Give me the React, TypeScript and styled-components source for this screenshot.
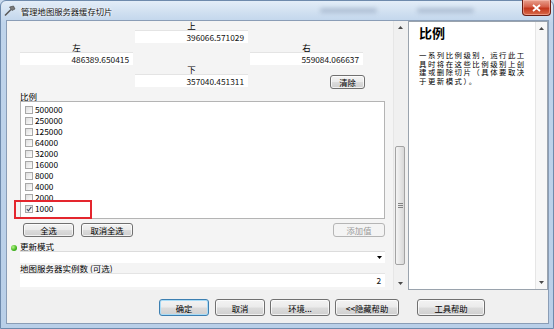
import React from "react";
import styled, { createGlobalStyle, css } from "styled-components";

const GlobalStyle = createGlobalStyle`
  html, body {
    margin: 0;
    padding: 0;
    width: 554px;
    height: 329px;
    overflow: hidden;
    background: #c9daee;
  }
  body {
    font-family: "Noto Sans CJK SC", "Noto Sans", sans-serif;
    font-size: 8.5px;
    color: #000;
  }
  * { box-sizing: border-box; }
`;

const Window = styled.div`
  width: 554px;
  height: 329px;
  display: flex;
  flex-direction: column;
  border: 1px solid #6e8aac;
  border-radius: 6px 6px 0 0;
  background: linear-gradient(180deg, #e3edf8 0px, #cfdff0 12px, #bfd4eb 22px, #b9cfe8 100%);
`;

const TitleBar = styled.div`
  height: 19px;
  display: flex;
  align-items: center;
  padding-left: 3px;
`;

const TitleText = styled.span`
  flex-shrink: 0;
  white-space: nowrap;
  margin-left: 5px;
  font-size: 8.3px;
  line-height: 10px;
  color: #111;
  text-shadow: 0 0 4px #ffffff, 0 0 2px #ffffff;
`;

const Smudge = styled.div<{ $ml: number; $w: number }>`
  flex-shrink: 0;
  margin-left: ${(p) => p.$ml}px;
  width: ${(p) => p.$w}px;
  height: 5px;
  border-radius: 3px;
  background: rgba(110, 130, 160, 0.35);
  filter: blur(2px);
`;

const CloseButton = styled.div`
  flex-shrink: 0;
  margin-left: auto;
  margin-right: 2px;
  align-self: flex-start;
  margin-top: -1px;
  width: 29px;
  height: 16px;
  border: 1px solid #6b1e14;
  border-top: none;
  border-radius: 0 0 4px 4px;
  background: linear-gradient(180deg, #e8a08e 0%, #d6604a 45%, #c3361c 55%, #d86b4a 100%);
  display: flex;
  align-items: center;
  justify-content: center;
  box-shadow: inset 0 0 0 1px rgba(255, 200, 190, 0.5);
`;

const Client = styled.div`
  flex: 1;
  margin: 0 4px 4px 5px;
  border: 1px solid #8a9db6;
  background: #f0f0f0;
  display: flex;
  flex-direction: column;
`;

const Main = styled.div`
  height: 269px;
  display: flex;
  gap: 2px;
`;

const LeftPane = styled.div`
  width: 399px;
  display: flex;
  background: #f4f4f4;
`;

const Form = styled.div`
  flex: 1;
  position: relative;
  display: flex;
  flex-direction: column;
  padding-left: 13px;
`;

const BBox = styled.div`
  display: grid;
  grid-template-columns: repeat(3, 113px);
  grid-template-rows: 9px 13px 9px 13px 9px 13px;
  column-gap: 2px;
`;

const Cell = styled.div<{ $col: number; $row: string }>`
  grid-column: ${(p) => p.$col};
  grid-row: ${(p) => p.$row};
`;

const DirLabel = styled(Cell)`
  text-align: center;
  font-size: 8.5px;
  line-height: 9px;
`;

const Field = styled.div`
  height: 100%;
  background: #ffffff;
  border-top: 1px solid #e4e4e4;
  text-align: right;
  padding-right: 4px;
  font-size: 8.3px;
  line-height: 12px;
  color: #111;
`;

const winButton = css`
  display: flex;
  align-items: center;
  justify-content: center;
  border: 1px solid #707070;
  border-radius: 3px;
  background: linear-gradient(180deg, #f3f3f3 0%, #ebebeb 48%, #dcdcdc 52%, #cfcfcf 100%);
  font-size: 8.3px;
  color: #000;
  box-shadow: inset 0 0 0 1px rgba(255, 255, 255, 0.7);
`;

const Btn = styled.div<{ $w: number; $h?: number; $primary?: boolean; $disabled?: boolean }>`
  ${winButton};
  width: ${(p) => p.$w}px;
  height: ${(p) => p.$h ?? 14}px;
  ${(p) =>
    p.$primary &&
    css`
      border-color: #3c7fb1;
      box-shadow: inset 0 0 0 1px #a8dcf7;
    `}
  ${(p) =>
    p.$disabled &&
    css`
      border-color: #b5b5b5;
      background: #f4f4f4;
      color: #9a9a9a;
      box-shadow: none;
    `}
`;

const ClearButton = styled(Btn)`
  grid-column: 3;
  grid-row: 5 / 7;
  justify-self: end;
  align-self: end;
  margin-right: -2px;
  margin-bottom: -2px;
`;

const ScaleLabel = styled.div`
  margin-top: 4px;
  height: 10px;
  line-height: 10px;
`;

const ScaleList = styled.div`
  width: 365px;
  height: 118px;
  border: 1px solid #b4b4b4;
  background: #ffffff;
  padding: 2px 0 0 4px;
  display: flex;
  flex-direction: column;
`;

const ScaleItem = styled.div`
  height: 11px;
  display: flex;
  align-items: center;
  gap: 2px;
  font-size: 8.3px;
  line-height: 11px;
`;

const CheckBox = styled.div<{ $checked?: boolean }>`
  width: 8px;
  height: 8px;
  border: 1px solid #a8a8a8;
  background: linear-gradient(135deg, #dedede 0%, #f4f4f4 70%, #ffffff 100%);
  display: flex;
  align-items: center;
  justify-content: center;
`;

const Highlight = styled.div`
  position: absolute;
  left: 7px;
  top: 179px;
  width: 78px;
  height: 19px;
  border: 2px solid #e4262e;
  pointer-events: none;
`;

const ButtonRow = styled.div`
  margin-top: 4px;
  width: 365px;
  height: 14px;
  display: flex;
`;

const RowButton = styled(Btn)<{ $ml: string }>`
  margin-left: ${(p) => p.$ml};
`;

const ParamLabel = styled.div<{ $indent?: boolean }>`
  height: 9px;
  line-height: 9px;
  display: flex;
  align-items: center;
  gap: 3px;
  margin-top: ${(p) => (p.$indent ? "5px" : "1px")};
  margin-left: ${(p) => (p.$indent ? "-9px" : "0")};
`;

const GreenDot = styled.div`
  width: 6px;
  height: 6px;
  margin-top: 3px;
  border-radius: 50%;
  background: radial-gradient(circle at 35% 35%, #b6f58a 0%, #3fb51c 60%, #2a8a12 100%);
`;

const Dropdown = styled.div`
  width: 365px;
  height: 12px;
  background: #ffffff;
  border-top: 1px solid #dcdcdc;
  display: flex;
  align-items: center;
  justify-content: flex-end;
  padding-right: 3px;
`;

const CountField = styled(Field)`
  width: 365px;
  height: 14px;
  line-height: 13px;
`;

const ScrollBar = styled.div<{ $w: number }>`
  width: ${(p) => p.$w}px;
  display: flex;
  flex-direction: column;
  background: #f0f0f0;
  border-left: 1px solid #e6e6e6;
`;

const ScrollArrow = styled.div`
  height: 13px;
  display: flex;
  align-items: center;
  justify-content: center;
`;

const Track = styled.div`
  flex: 1;
  display: flex;
  flex-direction: column;
`;

const Thumb = styled.div<{ $top: number; $h: number }>`
  margin: ${(p) => p.$top}px 1px 0 1px;
  height: ${(p) => p.$h}px;
  border: 1px solid #a3a3a3;
  border-radius: 2px;
  background: linear-gradient(90deg, #f4f4f4 0%, #e6e6e6 50%, #d8d8d8 100%);
  display: flex;
  align-items: center;
  justify-content: center;
`;

const RightPane = styled.div`
  flex: 1;
  display: flex;
  background: #ffffff;
  border: 1px solid #9aa3ad;
`;

const HelpBody = styled.div`
  flex: 1;
  padding: 3px 0 0 10px;
`;

const HelpTitle = styled.div`
  font-size: 13px;
  font-weight: 700;
  height: 16px;
  line-height: 16px;
`;

const HelpText = styled.div`
  margin-top: 10px;
  width: 110px;
  font-size: 7.4px;
  letter-spacing: 1.5px;
  line-height: 8.5px;
`;

const HelpScroll = styled(ScrollBar)`
  justify-content: space-between;
  background: #f7f7f7;
`;

const Footer = styled.div`
  flex: 1;
  display: flex;
  align-items: flex-start;
  padding: 9px 0 0 152px;
`;

const FooterButton = styled(Btn)<{ $ml: number }>`
  margin-left: ${(p) => p.$ml}px;
`;

const Tri = ({ up }: { up?: boolean }) => (
  <svg width="5" height="3" viewBox="0 0 5 3">
    <polygon points={up ? "0,3 5,3 2.5,0" : "0,0 5,0 2.5,3"} fill="#4a4a4a" />
  </svg>
);

const scales = ["500000", "250000", "125000", "64000", "32000", "16000", "8000", "4000", "2000", "1000"];

export default function App() {
  return (
    <>
      <GlobalStyle />
      <Window>
        <TitleBar>
          <svg width="12" height="12" viewBox="0 0 12 12">
            <path d="M1 10.5 L7 4.5" stroke="#5a5a5a" strokeWidth="1.6" />
            <path d="M5.5 2 L9.5 1 L11 4 L8 5.5 Z" fill="#7b7b7b" stroke="#3f3f3f" strokeWidth="0.6" />
          </svg>
          <TitleText>管理地图服务器缓存切片</TitleText>
          <Smudge $ml={208} $w={57} />
          <Smudge $ml={40} $w={57} />
          <CloseButton>
            <svg width="9" height="8" viewBox="0 0 9 8">
              <path d="M1 1 L8 7 M8 1 L1 7" stroke="#ffffff" strokeWidth="1.8" />
            </svg>
          </CloseButton>
        </TitleBar>
        <Client>
          <Main>
            <LeftPane>
              <Form>
                <BBox>
                  <DirLabel $col={2} $row="1">上</DirLabel>
                  <Cell $col={2} $row="2"><Field>396066.571029</Field></Cell>
                  <DirLabel $col={1} $row="3">左</DirLabel>
                  <Cell $col={1} $row="4"><Field>486389.650415</Field></Cell>
                  <DirLabel $col={3} $row="3">右</DirLabel>
                  <Cell $col={3} $row="4"><Field>559084.066637</Field></Cell>
                  <DirLabel $col={2} $row="5">下</DirLabel>
                  <Cell $col={2} $row="6"><Field>357040.451311</Field></Cell>
                  <ClearButton $w={35}>清除</ClearButton>
                </BBox>
                <ScaleLabel>比例</ScaleLabel>
                <ScaleList>
                  {scales.map((s) => (
                    <ScaleItem key={s}>
                      <CheckBox $checked={s === "1000"}>
                        {s === "1000" && (
                          <svg width="6" height="6" viewBox="0 0 6 6">
                            <path d="M0.8 3 L2.4 4.8 L5.4 0.8" stroke="#3a4a6a" strokeWidth="1.1" fill="none" />
                          </svg>
                        )}
                      </CheckBox>
                      {s}
                    </ScaleItem>
                  ))}
                </ScaleList>
                <Highlight />
                <ButtonRow>
                  <RowButton $w={51} $ml="3px">全选</RowButton>
                  <RowButton $w={52} $ml="7px">取消全选</RowButton>
                  <RowButton $w={52} $ml="auto" $disabled>添加值</RowButton>
                </ButtonRow>
                <ParamLabel $indent>
                  <GreenDot />
                  更新模式
                </ParamLabel>
                <Dropdown>
                  <svg width="5" height="3" viewBox="0 0 5 3">
                    <polygon points="0,0 5,0 2.5,3" fill="#000" />
                  </svg>
                </Dropdown>
                <ParamLabel>地图服务器实例数 (可选)</ParamLabel>
                <CountField>2</CountField>
              </Form>
              <ScrollBar $w={13}>
                <ScrollArrow><Tri up /></ScrollArrow>
                <Track>
                  <Thumb $top={112} $h={119}>
                    <svg width="5" height="5" viewBox="0 0 5 5">
                      <path d="M0 0.5 H5 M0 2.5 H5 M0 4.5 H5" stroke="#6a6a6a" strokeWidth="0.8" />
                    </svg>
                  </Thumb>
                </Track>
                <ScrollArrow><Tri /></ScrollArrow>
              </ScrollBar>
            </LeftPane>
            <RightPane>
              <HelpBody>
                <HelpTitle>比例</HelpTitle>
                <HelpText>一系列比例级别，运行此工具时将在这些比例级别上创建或删除切片（具体要取决于更新模式）。</HelpText>
              </HelpBody>
              <HelpScroll $w={12}>
                <ScrollArrow><Tri up /></ScrollArrow>
                <ScrollArrow><Tri /></ScrollArrow>
              </HelpScroll>
            </RightPane>
          </Main>
          <Footer>
            <FooterButton $w={50} $h={17} $ml={0} $primary>确定</FooterButton>
            <FooterButton $w={50} $h={17} $ml={6}>取消</FooterButton>
            <FooterButton $w={60} $h={17} $ml={5}>环境...</FooterButton>
            <FooterButton $w={64} $h={17} $ml={5}>&lt;&lt;隐藏帮助</FooterButton>
            <FooterButton $w={68} $h={17} $ml={18}>工具帮助</FooterButton>
          </Footer>
        </Client>
      </Window>
    </>
  );
}
